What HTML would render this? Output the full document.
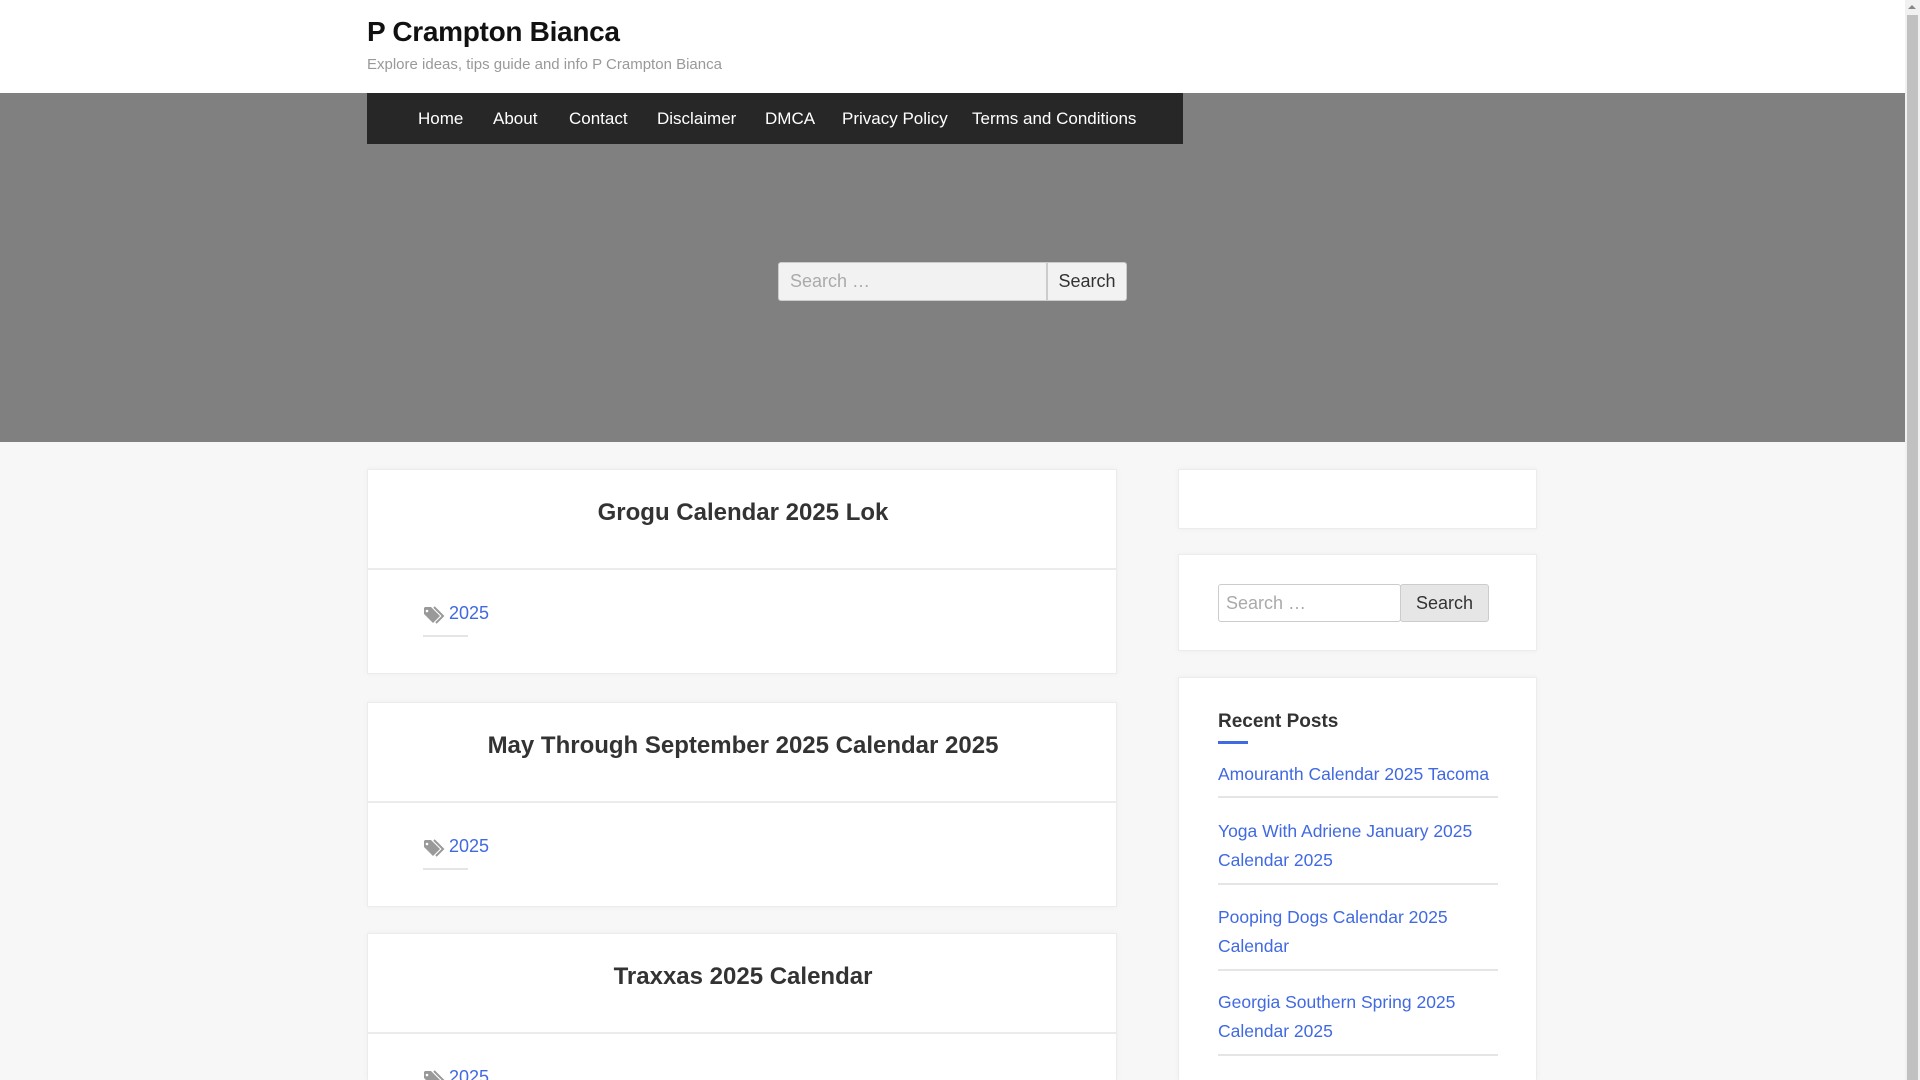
<!DOCTYPE html>
<html style="overflow:hidden;height:1080px"><head><meta charset="utf-8"><style>
*{box-sizing:border-box;margin:0;padding:0}
body{width:1920px;height:1080px;overflow:hidden;background:#f7f7f7;font-family:"Liberation Sans",sans-serif;position:relative}
.a{position:absolute;white-space:nowrap}
.card{position:absolute;background:#fff;border:1px solid #ececec;box-shadow:0 0 6px rgba(0,0,0,.04);overflow:hidden}
.nav span{position:absolute;top:0;line-height:51px;color:#fff;font-size:17px}
.ct{position:absolute;left:0;width:750px;text-align:center;font-size:24px;font-weight:bold;color:#333}
.tag{position:absolute;left:55px;font-size:18px;color:#4169e1}
.tag svg{position:absolute;left:0;top:3px}
.tag b{position:absolute;left:26px;font-weight:normal}
.tag i{position:absolute;left:0;top:32px;width:45px;height:2px;background:#e5e5e5}
.lk{color:#4169e1;font-size:17.5px}
.hr{position:absolute;left:1218px;width:280px;height:2px;background:#e5e5e5}
</style></head><body>
<div class="a" style="left:0;top:0;width:1905px;height:93px;background:#fff"></div>
<div class="a" style="left:367px;top:16px;font-size:28px;font-weight:bold;color:#111;letter-spacing:-0.3px">P Crampton Bianca</div>
<div class="a" style="left:367px;top:56px;font-size:15px;color:#999">Explore ideas, tips guide and info P Crampton Bianca</div>
<div class="a" style="left:0;top:93px;width:1905px;height:349px;background:#808080"></div>
<div class="a nav" style="left:367px;top:93px;width:816px;height:51px;background:#272727">
<span style="left:51px">Home</span><span style="left:126px">About</span><span style="left:202px">Contact</span><span style="left:290px">Disclaimer</span><span style="left:398px">DMCA</span><span style="left:475px">Privacy Policy</span><span style="left:605px">Terms and Conditions</span></div>
<div class="a" style="left:778px;top:262px;width:269px;height:39px;background:#f2f2f2;border:1px solid #ccc;border-radius:3px 0 0 3px;font-size:18px;color:#aaa;padding:8px 11px">Search …</div>
<div class="a" style="left:1047px;top:262px;width:80px;height:39px;background:#f2f2f2;border:1px solid #ccc;border-radius:0 3px 3px 0;font-size:18px;color:#333;text-align:center;line-height:37px">Search</div>

<div class="card" style="left:367px;top:469px;width:750px;height:205px">
<div class="ct" style="top:29px">Grogu Calendar 2025 Lok</div>
<div class="a" style="left:0;top:98px;width:748px;height:2px;background:#ececec"></div>
<div class="tag" style="top:133px"><svg width="24" height="20" viewBox="0 0 24 20"><path d="M1 2v6l9 9 7-7-9-9H2z" fill="#999"/><circle cx="4" cy="5" r="1.3" fill="#fff"/><path d="M11 1l9 9-7 7" stroke="#999" stroke-width="2" fill="none"/></svg><b>2025</b><i></i></div>
</div>
<div class="card" style="left:367px;top:702px;width:750px;height:205px">
<div class="ct" style="top:29px">May Through September 2025 Calendar 2025</div>
<div class="a" style="left:0;top:98px;width:748px;height:2px;background:#ececec"></div>
<div class="tag" style="top:133px"><svg width="24" height="20" viewBox="0 0 24 20"><path d="M1 2v6l9 9 7-7-9-9H2z" fill="#999"/><circle cx="4" cy="5" r="1.3" fill="#fff"/><path d="M11 1l9 9-7 7" stroke="#999" stroke-width="2" fill="none"/></svg><b>2025</b><i></i></div>
</div>
<div class="card" style="left:367px;top:933px;width:750px;height:147px;border-bottom:none">
<div class="ct" style="top:29px">Traxxas 2025 Calendar</div>
<div class="a" style="left:0;top:98px;width:748px;height:2px;background:#ececec"></div>
<div class="tag" style="top:133px"><svg width="24" height="20" viewBox="0 0 24 20"><path d="M1 2v6l9 9 7-7-9-9H2z" fill="#999"/><circle cx="4" cy="5" r="1.3" fill="#fff"/><path d="M11 1l9 9-7 7" stroke="#999" stroke-width="2" fill="none"/></svg><b>2025</b></div>
</div>

<div class="card" style="left:1178px;top:469px;width:359px;height:60px"></div>
<div class="card" style="left:1178px;top:554px;width:359px;height:97px"></div>
<div class="a" style="left:1218px;top:584px;width:183px;height:38px;background:#fff;border:1px solid #ccc;border-radius:3px;font-size:18px;color:#aaa;padding:8px 7px">Search …</div>
<div class="a" style="left:1400px;top:584px;width:89px;height:38px;background:#e6e6e6;border:1px solid #ccc;border-radius:3px;font-size:18px;color:#333;text-align:center;line-height:36px">Search</div>
<div class="card" style="left:1178px;top:677px;width:359px;height:403px;border-bottom:none"></div>
<div class="a" style="left:1218px;top:711px;font-size:19px;font-weight:bold;color:#333">Recent Posts</div>
<div class="a" style="left:1218px;top:741px;width:30px;height:3px;background:#4169e1"></div>
<div class="a lk" style="left:1218px;top:764px">Amouranth Calendar 2025 Tacoma</div>
<div class="hr" style="top:796px"></div>
<div class="a lk" style="left:1218px;top:817px;line-height:29px">Yoga With Adriene January 2025<br>Calendar 2025</div>
<div class="hr" style="top:883px"></div>
<div class="a lk" style="left:1218px;top:903px;line-height:29px">Pooping Dogs Calendar 2025<br>Calendar</div>
<div class="hr" style="top:969px"></div>
<div class="a lk" style="left:1218px;top:988px;line-height:29px">Georgia Southern Spring 2025<br>Calendar 2025</div>
<div class="hr" style="top:1054px"></div>

<div class="a" style="left:1905px;top:0;width:15px;height:1080px;background:#f1f1f1"></div>
<div class="a" style="left:1907px;top:15px;width:11px;height:1065px;background:#c1c1c1"></div>
<div class="a" style="left:1908px;top:5px;width:0;height:0;border-left:4px solid transparent;border-right:4px solid transparent;border-bottom:4px solid #888"></div>
</body></html>
